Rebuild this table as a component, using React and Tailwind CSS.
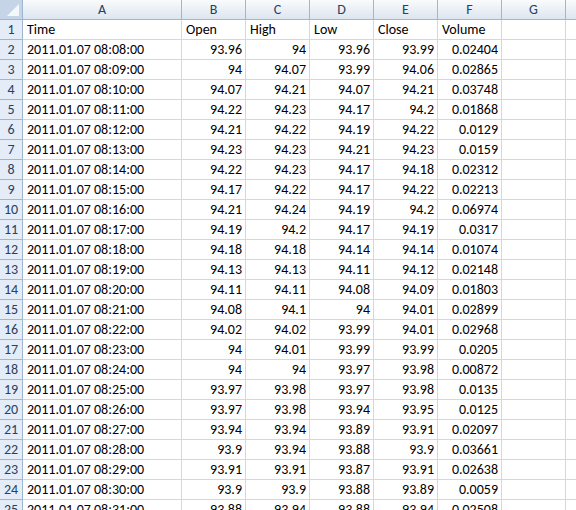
const COLS = ['A', 'B', 'C', 'D', 'E', 'F', 'G', ''];

const ROWS = [
  ['08:08', '93.96', '94', '93.96', '93.99', '0.02404'],
  ['08:09', '94', '94.07', '93.99', '94.06', '0.02865'],
  ['08:10', '94.07', '94.21', '94.07', '94.21', '0.03748'],
  ['08:11', '94.22', '94.23', '94.17', '94.2', '0.01868'],
  ['08:12', '94.21', '94.22', '94.19', '94.22', '0.0129'],
  ['08:13', '94.23', '94.23', '94.21', '94.23', '0.0159'],
  ['08:14', '94.22', '94.23', '94.17', '94.18', '0.02312'],
  ['08:15', '94.17', '94.22', '94.17', '94.22', '0.02213'],
  ['08:16', '94.21', '94.24', '94.19', '94.2', '0.06974'],
  ['08:17', '94.19', '94.2', '94.17', '94.19', '0.0317'],
  ['08:18', '94.18', '94.18', '94.14', '94.14', '0.01074'],
  ['08:19', '94.13', '94.13', '94.11', '94.12', '0.02148'],
  ['08:20', '94.11', '94.11', '94.08', '94.09', '0.01803'],
  ['08:21', '94.08', '94.1', '94', '94.01', '0.02899'],
  ['08:22', '94.02', '94.02', '93.99', '94.01', '0.02968'],
  ['08:23', '94', '94.01', '93.99', '93.99', '0.0205'],
  ['08:24', '94', '94', '93.97', '93.98', '0.00872'],
  ['08:25', '93.97', '93.98', '93.97', '93.98', '0.0135'],
  ['08:26', '93.97', '93.98', '93.94', '93.95', '0.0125'],
  ['08:27', '93.94', '93.94', '93.89', '93.91', '0.02097'],
  ['08:28', '93.9', '93.94', '93.88', '93.9', '0.03661'],
  ['08:29', '93.91', '93.91', '93.87', '93.91', '0.02638'],
  ['08:30', '93.9', '93.9', '93.88', '93.89', '0.0059'],
  ['08:31', '93.88', '93.94', '93.88', '93.94', '0.02508'],
];

const HEADERS = ['Time', 'Open', 'High', 'Low', 'Close', 'Volume'];

const gridCols = 'grid grid-cols-[23px_159px_64px_64px_64px_64px_64px_64px_64px]';

export default function App() {
  return (
    <div
      className="w-[576px] h-[510px] overflow-hidden bg-white text-[14px] leading-none text-black"
      style={{ fontFamily: 'Calibri, Carlito, "Liberation Sans", sans-serif' }}
    >
      {/* column headers */}
      <div className={`${gridCols} h-[20px]`}>
        <div className="relative border-r border-b border-[#9eb6ce] bg-[#c6d4e7]">
          <div className="absolute right-[3px] bottom-[3px] w-0 h-0 border-l-[12px] border-l-transparent border-b-[12px] border-b-[#f4f7fb]" />
        </div>
        {COLS.map((c, i) => (
          <div
            key={i}
            className="flex items-center justify-center border-r border-b border-[#9eb6ce] bg-gradient-to-b from-[#f9fbfd] to-[#dde5ef] text-[#27415f]"
          >
            {c}
          </div>
        ))}
      </div>

      {/* row 1 */}
      <div className={`${gridCols} h-[20px]`}>
        <div className="flex items-center justify-center border-r border-b border-[#9eb6ce] bg-[#e4ecf7] text-[#27415f]">1</div>
        {HEADERS.map(h => (
          <div key={h} className="flex items-center pl-[4px] border-r border-b border-[#d0d7e5]">{h}</div>
        ))}
        <div className="border-r border-b border-[#d0d7e5]" />
        <div className="border-r border-b border-[#d0d7e5]" />
      </div>

      {/* data rows */}
      {ROWS.map((r, i) => (
        <div key={i} className={`${gridCols} h-[20px]`}>
          <div className="flex items-center justify-center border-r border-b border-[#9eb6ce] bg-[#e4ecf7] text-[#27415f]">{i + 2}</div>
          <div className="flex items-center pl-[4px] border-r border-b border-[#d0d7e5] whitespace-nowrap">2011.01.07 {r[0]}:00</div>
          {r.slice(1).map((v, j) => (
            <div key={j} className="flex items-center justify-end pr-[3px] border-r border-b border-[#d0d7e5]">{v}</div>
          ))}
          <div className="border-r border-b border-[#d0d7e5]" />
          <div className="border-r border-b border-[#d0d7e5]" />
        </div>
      ))}
    </div>
  );
}
